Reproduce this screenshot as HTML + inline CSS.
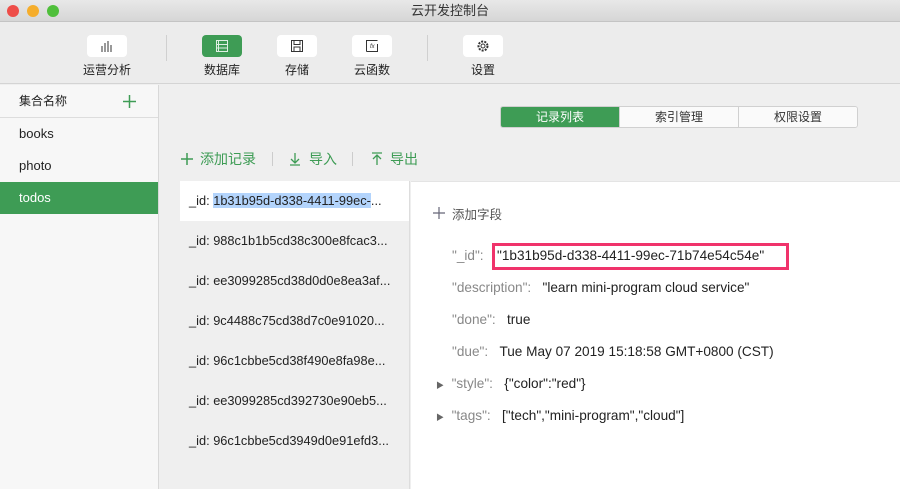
<!DOCTYPE html>
<html><head><meta charset="utf-8"><style>
*{margin:0;padding:0;box-sizing:border-box}
body{width:900px;height:489px;overflow:hidden;background:#efefef;font-family:"Liberation Sans","Noto Sans CJK SC",sans-serif;font-size:13px;color:#222;position:relative}
.abs{position:absolute}
.title{left:0;top:0;width:900px;height:22px;background:linear-gradient(#e8e8e8,#d6d6d6);border-bottom:1px solid #c4c4c4;text-align:center;line-height:22px;font-size:13px;color:#333}
.dot{width:12px;height:12px;border-radius:50%;top:5px}
.tb{left:0;top:22px;width:900px;height:62px;background:#ececec;border-bottom:1px solid #d4d4d4}
.btn{width:40px;height:22px;background:#fff;border-radius:4px;top:13px;display:flex;align-items:center;justify-content:center}
.lbl{top:39px;font-size:12px;color:#222;width:80px;text-align:center}
.sep{width:1px;height:26px;background:#d0d0d0;top:13px}
.side{left:0;top:85px;width:159px;height:404px;background:#f7f7f7;border-right:1px solid #d8d8d8}
.side .it{height:32px;line-height:32px;padding-left:19px;font-size:13px}
.tabs{left:500px;top:106px;height:22px;width:358px;display:flex;border:1px solid #d0d0d0;border-radius:3px;overflow:hidden}
.tabs div{flex:1;text-align:center;line-height:20px;font-size:12px;background:#fafafa;border-left:1px solid #d0d0d0;color:#333}
.tabs div:first-child{background:#3e9c55;color:#fff;border:none}
.act{top:149px;font-size:14px;color:#3e9c55;height:20px;line-height:20px}
.list{left:180px;top:181px;width:230px;height:308px;background:#efefef;border-right:1px solid #ddd}
.list div{height:40px;line-height:40px;padding-left:9px;font-size:12.8px;color:#222;white-space:nowrap;overflow:hidden}
.det{left:411px;top:181px;width:489px;height:308px;background:#fff;border-top:1px solid #e4e4e4}
.row{left:452px;font-size:13.6px;color:#222}
.k{color:#888}
</style></head><body>
<div class="abs title">云开发控制台</div>
<div class="abs dot" style="left:7px;background:#ee4d48"></div>
<div class="abs dot" style="left:27px;background:#f5ad2b"></div>
<div class="abs dot" style="left:47px;background:#4fbf3b"></div>
<div class="abs tb">
 <div class="abs btn" style="left:87px"><svg width="14" height="12"><path d="M2 6v6M5 3v9M8 1v11M11 5v7" stroke="#333" stroke-width="1"/></svg></div>
 <div class="abs lbl" style="left:67px">运营分析</div>
 <div class="abs sep" style="left:166px"></div>
 <div class="abs btn" style="left:202px;background:#3e9c55"><svg width="14" height="12"><rect x="1.5" y="0.5" width="11" height="11" fill="none" stroke="#dff0e3"/><path d="M1.5 4.5h11M1.5 8h11M3.5 0.5v11" stroke="#dff0e3"/></svg></div>
 <div class="abs lbl" style="left:182px">数据库</div>
 <div class="abs btn" style="left:277px"><svg width="14" height="12"><rect x="1.5" y="0.5" width="11" height="11" fill="none" stroke="#333"/><rect x="4" y="0.5" width="6" height="4" fill="none" stroke="#333"/><rect x="4" y="7" width="6" height="4.5" fill="none" stroke="#333"/></svg></div>
 <div class="abs lbl" style="left:257px">存储</div>
 <div class="abs btn" style="left:352px"><svg width="14" height="12"><path d="M1.5 11.5V0.5h11" fill="none" stroke="#333"/><path d="M1.5 11.5h11V4" fill="none" stroke="#333"/><text x="5" y="8" font-size="6" font-style="italic" fill="#333">fx</text></svg></div>
 <div class="abs lbl" style="left:332px">云函数</div>
 <div class="abs sep" style="left:427px"></div>
 <div class="abs btn" style="left:463px"><svg width="14" height="14"><circle cx="7" cy="7" r="4.5" fill="none" stroke="#333" stroke-dasharray="2 1.2" stroke-width="2"/><circle cx="7" cy="7" r="2" fill="none" stroke="#333"/></svg></div>
 <div class="abs lbl" style="left:443px">设置</div>
</div>
<div class="abs side">
 <div style="height:33px;line-height:32px;padding-left:19px;border-bottom:1px solid #ddd;font-size:12px;position:relative">集合名称<svg style="position:absolute;left:123px;top:10px" width="13" height="13"><path d="M6.5 0v13M0 6.5h13" stroke="#3e9c55" stroke-width="1.5"/></svg></div>
 <div class="it">books</div><div class="it">photo</div>
 <div class="it" style="background:#3e9c55;color:#fff">todos</div>
</div>
<div class="abs tabs"><div>记录列表</div><div>索引管理</div><div>权限设置</div></div>
<svg class="abs" style="left:181px;top:153px" width="12" height="12"><path d="M6 0v12M0 6h12" stroke="#3e9c55" stroke-width="1.5"/></svg>
<div class="abs act" style="left:200px">添加记录</div>
<div class="abs" style="left:272px;top:152px;width:1px;height:14px;background:#ccc"></div>
<svg class="abs" style="left:289px;top:152px" width="12" height="14"><path d="M6 1v10M2 7l4 4 4-4M1 13h10" fill="none" stroke="#3e9c55" stroke-width="1.3"/></svg>
<div class="abs act" style="left:309px">导入</div>
<div class="abs" style="left:352px;top:152px;width:1px;height:14px;background:#ccc"></div>
<svg class="abs" style="left:371px;top:152px" width="12" height="14"><path d="M6 13V3M2 7l4-4 4 4M1 1h10" fill="none" stroke="#3e9c55" stroke-width="1.3"/></svg>
<div class="abs act" style="left:390px">导出</div>
<div class="abs list">
 <div style="background:#fff">_id: <span style="background:#b3d4fc">1b31b95d-d338-4411-99ec-</span>...</div>
 <div>_id: 988c1b1b5cd38c300e8fcac3...</div>
 <div>_id: ee3099285cd38d0d0e8ea3af...</div>
 <div>_id: 9c4488c75cd38d7c0e91020...</div>
 <div>_id: 96c1cbbe5cd38f490e8fa98e...</div>
 <div>_id: ee3099285cd392730e90eb5...</div>
 <div>_id: 96c1cbbe5cd3949d0e91efd3...</div>
</div>
<div class="abs det"></div>
<svg class="abs" style="left:433px;top:207px" width="12" height="12"><path d="M6 0v12M0 6h12" stroke="#667" stroke-width="1.2"/></svg>
<div class="abs" style="left:452px;top:204px;font-size:12.5px;color:#555">添加字段</div>
<div class="abs row" style="top:248px"><span class="k">"_id":</span></div>
<div class="abs" style="left:492px;top:243px;width:297px;height:27px;border:3px solid #f0336b"></div>
<div class="abs row" style="left:497px;top:248px">"1b31b95d-d338-4411-99ec-71b74e54c54e"</div>
<div class="abs row" style="top:280px"><span class="k">"description":</span>&nbsp;&nbsp;&nbsp;"learn mini-program cloud service"</div>
<div class="abs row" style="top:312px"><span class="k">"done":</span>&nbsp;&nbsp;&nbsp;true</div>
<div class="abs row" style="top:344px"><span class="k">"due":</span>&nbsp;&nbsp;&nbsp;Tue May 07 2019 15:18:58 GMT+0800 (CST)</div>
<div class="abs row" style="left:436px;top:376px"><span style="font-size:8px;color:#666">▶</span>&nbsp;&nbsp;<span class="k">"style":</span>&nbsp;&nbsp;&nbsp;{"color":"red"}</div>
<div class="abs row" style="left:436px;top:408px"><span style="font-size:8px;color:#666">▶</span>&nbsp;&nbsp;<span class="k">"tags":</span>&nbsp;&nbsp;&nbsp;["tech","mini-program","cloud"]</div>
</body></html>
